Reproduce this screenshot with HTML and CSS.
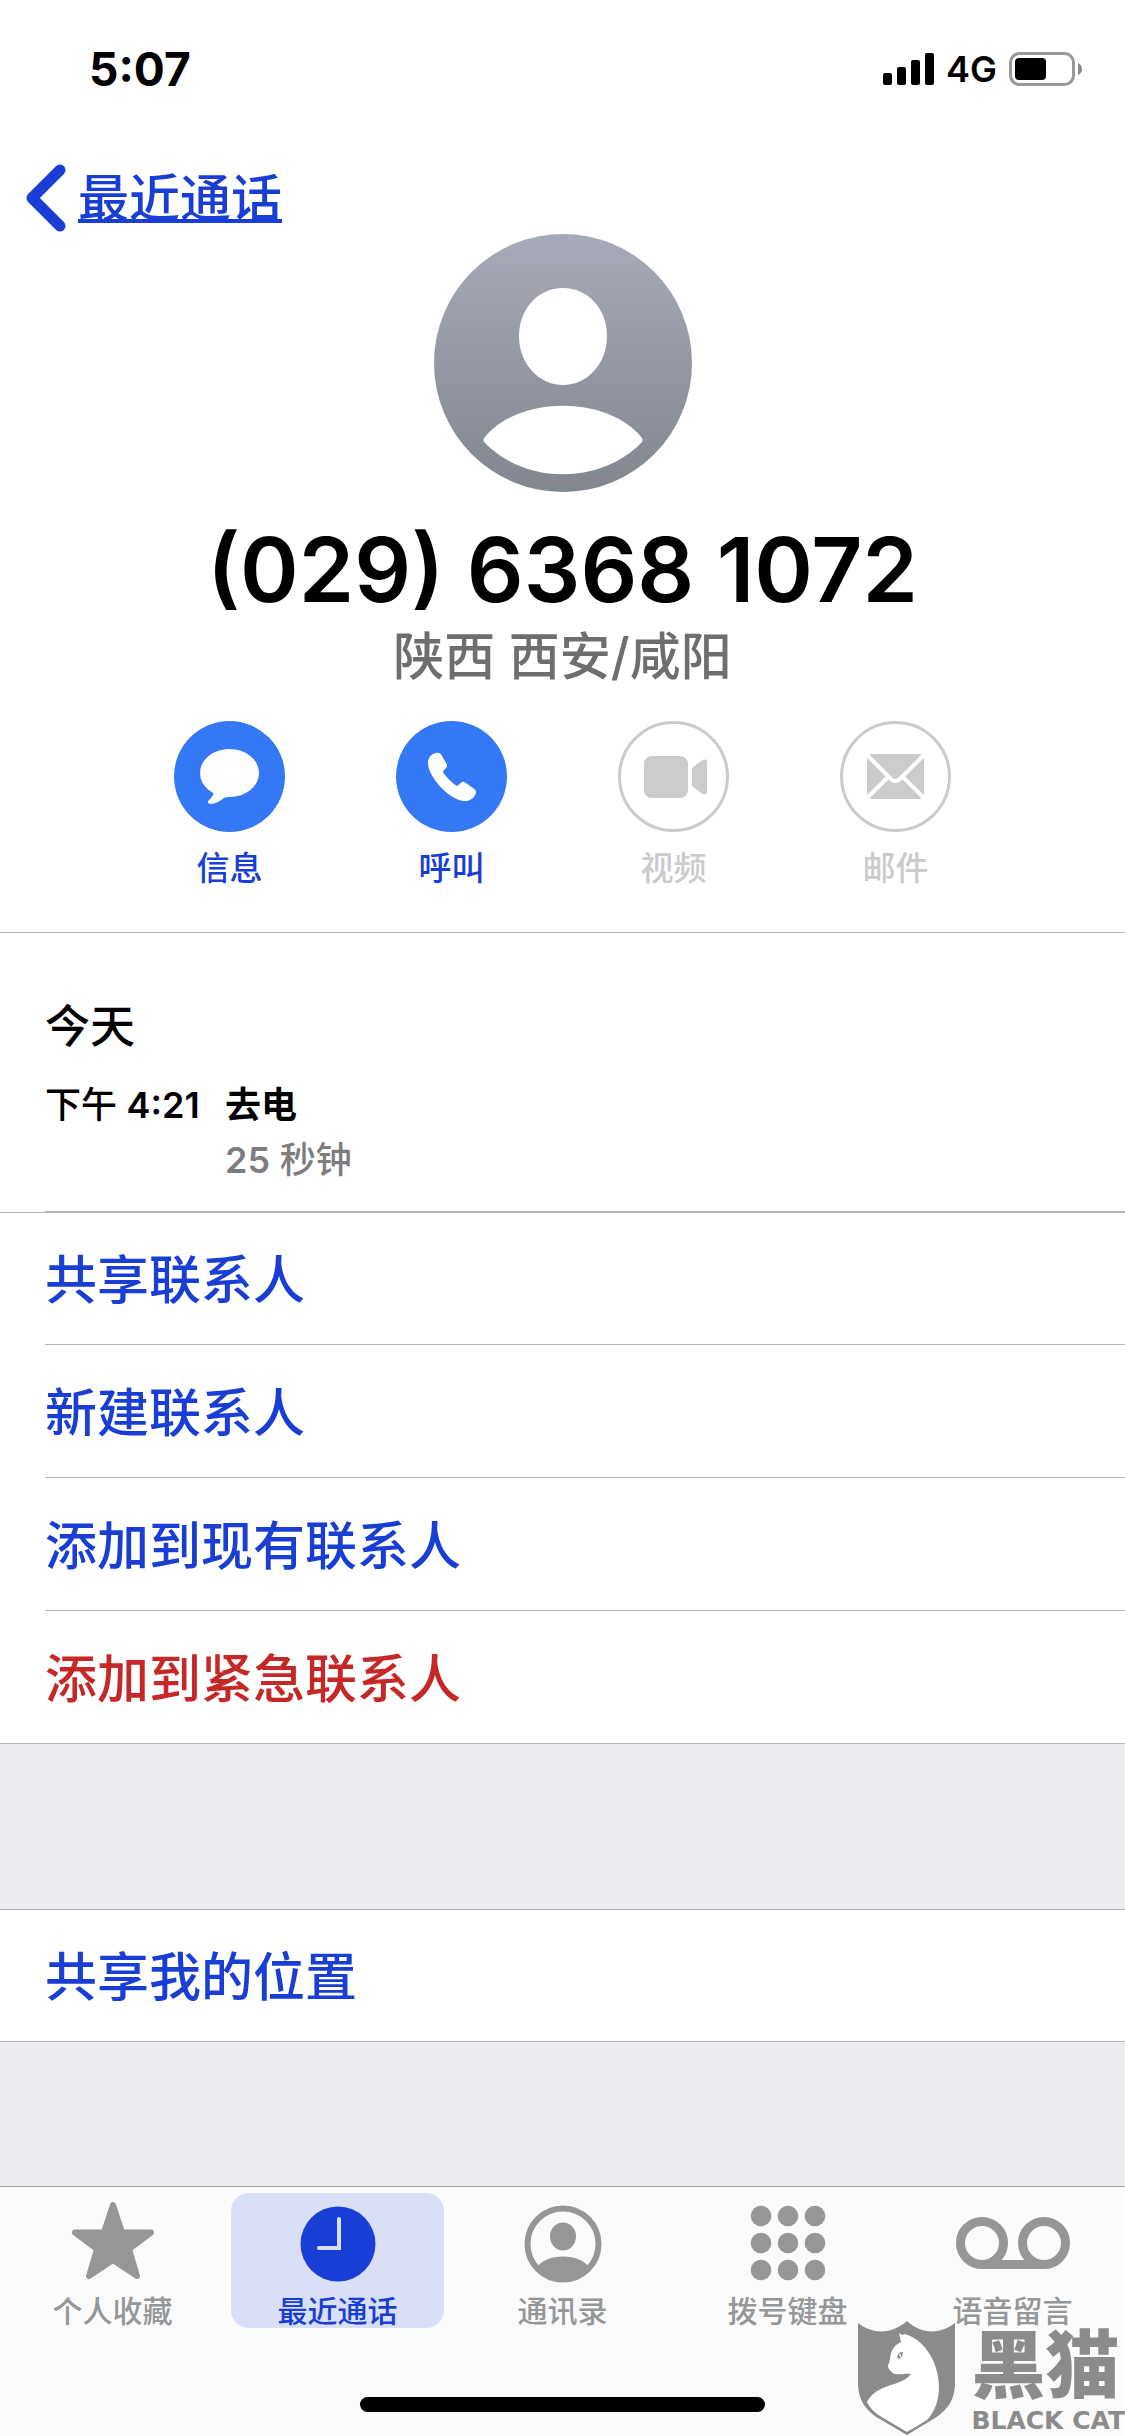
FILE: index.html
```html
<!DOCTYPE html>
<html lang="zh-CN">
<head>
<meta charset="utf-8">
<meta name="viewport" content="width=device-width, initial-scale=1">
<title>最近通话</title>
<link rel="stylesheet" href="styles.css">
</head>
<body>
<div class="screen">
  <header class="status">
    <span class="clock">5:07</span>
    <div class="indicators">
      <svg class="signal" viewBox="0 0 51 34" aria-hidden="true">
        <rect x="0" y="21" width="9" height="12" rx="2"/>
        <rect x="14" y="15" width="9" height="18" rx="2"/>
        <rect x="28" y="8" width="9" height="25" rx="2"/>
        <rect x="42" y="1" width="9" height="32" rx="2"/>
      </svg>
      <span class="network">4G</span>
      <svg class="battery" viewBox="0 0 74 34" aria-hidden="true">
        <rect x="1.5" y="1.5" width="63" height="31" rx="9" fill="none" stroke="#999" stroke-width="3"/>
        <rect x="6" y="6" width="31" height="22" rx="4"/>
        <path d="M69 11 Q73 13 73 17 T69 23Z" fill="#8a8a8a"/>
      </svg>
    </div>
  </header>

  <nav class="topbar">
    <a class="back" href="#recents">
      <svg class="chevron" viewBox="0 0 40 66" aria-hidden="true"><path d="M34 5 L6 33 L34 61"/></svg>
      <span class="back-text">最近通话</span>
    </a>
  </nav>

  <main class="content">
    <section class="card">
      <svg class="avatar" viewBox="0 0 258 258" aria-hidden="true">
        <defs>
          <linearGradient id="avatar-fill" x1="0" y1="0" x2="0" y2="1">
            <stop offset="0" stop-color="#a7abb9"/>
            <stop offset="1" stop-color="#82868f"/>
          </linearGradient>
        </defs>
        <circle cx="129" cy="129" r="129" fill="url(#avatar-fill)"/>
        <path fill="#fff" d="M129 54 C154 54 173 75 173 102 C173 130 153 151 129 151 C105 151 85 130 85 102 C85 75 104 54 129 54Z"/>
        <path fill="#fff" d="M50 204 C84 161 174 161 208 204 Q209 206 208 208 C167 251 91 251 50 208 Q49 206 50 204Z"/>
      </svg>
      <h1 class="number">(029) 6368 1072</h1>
      <p class="region">陕西 西安/咸阳</p>
      <div class="actions">
        <button class="action" type="button">
          <svg class="action-icon" viewBox="0 0 111 111" aria-hidden="true">
            <circle cx="55.5" cy="55.5" r="55.5" fill="#3478f6"/>
            <ellipse cx="55.5" cy="52" rx="29.5" ry="24" fill="#fff"/>
            <path fill="#fff" d="M40 70 C40 76 34 79 34 81 C34 84 40 83 44 81 C48 79 50 76 54 76 L58 70Z"/>
          </svg>
          <span>信息</span>
        </button>
        <button class="action" type="button">
          <svg class="action-icon" viewBox="0 0 111 111" aria-hidden="true">
            <circle cx="55.5" cy="55.5" r="55.5" fill="#3478f6"/>
            <path fill="#fff" d="M40 32 C43 31 45 33 46 35 L50 42 C52 45 51 46 49 48 C48 49 47 50 47 51 C50 56 56 62 61 65 C63 64 64 62 66 61 C68 60 70 62 77 67 C80 69 81 71 79 74 C77 78 73 80 69 80 C54 80 32 56 32 42 C32 37 35 33 40 32Z"/>
          </svg>
          <span>呼叫</span>
        </button>
        <button class="action" type="button" disabled>
          <svg class="action-icon" viewBox="0 0 111 111" aria-hidden="true">
            <circle cx="55.5" cy="55.5" r="54" fill="none" stroke="#cbcbcd" stroke-width="3"/>
            <rect x="26" y="35" width="44" height="42" rx="8" fill="#cbcbcd"/>
            <path fill="#cbcbcd" d="M74 47 L83 40 Q89 36 89 42 V70 Q89 76 83 72 L74 65Z"/>
          </svg>
          <span>视频</span>
        </button>
        <button class="action" type="button" disabled>
          <svg class="action-icon" viewBox="0 0 111 111" aria-hidden="true">
            <circle cx="55.5" cy="55.5" r="54" fill="none" stroke="#cbcbcd" stroke-width="3"/>
            <rect x="27" y="33" width="57" height="45" rx="5" fill="#cbcbcd"/>
            <path fill="none" stroke="#fff" stroke-width="4" d="M27 34 L51 58 Q55.5 62 60 58 L84 34 M48 56 L27 77 M63 56 L84 77"/>
          </svg>
          <span>邮件</span>
        </button>
      </div>
    </section>

    <section class="history">
      <h2 class="day">今天</h2>
      <div class="call">
        <time class="time">下午 <span class="digits">4:21</span></time>
        <div>
          <p class="kind">去电</p>
          <p class="duration"><span class="digits">25</span> 秒钟</p>
        </div>
      </div>
    </section>

    <section class="list">
      <button class="row" type="button">共享联系人</button>
      <button class="row" type="button">新建联系人</button>
      <button class="row" type="button">添加到现有联系人</button>
      <button class="row danger" type="button">添加到紧急联系人</button>
    </section>

    <section class="list location">
      <button class="row" type="button">共享我的位置</button>
    </section>
  </main>

  <footer class="bottom">
    <nav class="tabs">
      <a class="tab" href="#favorites">
        <svg class="tab-icon" viewBox="0 0 84 84" aria-hidden="true">
          <path fill="currentColor" stroke="currentColor" stroke-width="6" stroke-linejoin="round" d="M42 4 L51 31.500 H80 L58 48 L66 75 L42 59 L18 75 L26 48 L4 31.500 H33Z"/>
        </svg>
        <span>个人收藏</span>
      </a>
      <a class="tab selected" href="#recents" aria-current="page">
        <svg class="tab-icon" viewBox="0 0 84 84" aria-hidden="true">
          <circle cx="42" cy="43" r="37.500" fill="currentColor"/>
          <path fill="none" stroke="#d8dff6" stroke-width="4" stroke-linecap="round" d="M43 18 V47 H23"/>
        </svg>
        <span>最近通话</span>
      </a>
      <a class="tab" href="#contacts">
        <svg class="tab-icon" viewBox="0 0 84 84" aria-hidden="true">
          <circle cx="42" cy="43" r="35.500" fill="none" stroke="currentColor" stroke-width="6"/>
          <ellipse cx="42" cy="35.500" rx="13" ry="14" fill="currentColor"/>
          <path fill="currentColor" d="M15 67 Q24 55.500 42 55.500 T69 67 A38 38 0 0 1 15 67Z"/>
        </svg>
        <span>通讯录</span>
      </a>
      <a class="tab" href="#keypad">
        <svg class="tab-icon" viewBox="0 0 84 84" aria-hidden="true">
          <g fill="currentColor">
            <circle cx="15" cy="15" r="10.300"/><circle cx="42" cy="15" r="10.300"/><circle cx="69" cy="15" r="10.300"/>
            <circle cx="15" cy="42" r="10.300"/><circle cx="42" cy="42" r="10.300"/><circle cx="69" cy="42" r="10.300"/>
            <circle cx="15" cy="69" r="10.300"/><circle cx="42" cy="69" r="10.300"/><circle cx="69" cy="69" r="10.300"/>
          </g>
        </svg>
        <span>拨号键盘</span>
      </a>
      <a class="tab" href="#voicemail">
        <svg class="tab-icon wide" viewBox="0 0 120 84" aria-hidden="true">
          <g fill="none" stroke="currentColor" stroke-width="9">
            <circle cx="29" cy="42" r="21.500"/>
            <circle cx="91" cy="42" r="21.500"/>
            <path d="M29 63.500 H91"/>
          </g>
        </svg>
        <span>语音留言</span>
      </a>
    </nav>
    <div class="home-indicator"></div>
  </footer>

  <div class="watermark">
    <svg class="shield" viewBox="0 0 98 115" aria-hidden="true">
      <path fill="#8b8b8b" d="M0 2 C16 14 34 13 49 0 C63 13 81 14 97 2 V62 C97 80 88 90 77 97 L49 114 L20 97 C9 90 0 80 0 62Z"/>
      <path fill="#fff" d="M41 12 L44 14 L47 13 C65 18 81 40 81 66 C81 80 76 92 69 99 L49 111 L22 95 C16 91 12 87 9 81 C11 77 14 73 21 69 C31 63 47 62 53 53 C47 52 45 54 37 53 C34 52 30 48 30 45 C30 43 32 41 32 38 C33 28 37 24 43 21Z"/>
      <path fill="#8b8b8b" d="M39 36 Q40 31 45 31 Q45 36 41 38Z"/>
      <path fill="#fff" d="M41 33 H43 V36 H42Z"/>
    </svg>
    <div class="brand">
      <span class="brand-cn">黑猫</span>
      <span class="brand-en">BLACK CAT</span>
    </div>
  </div>
</div>
</body>
</html>
```
FILE: styles.css
```css
:root {
  --blue: #183ed5;
  --line: #b4b4b6;
  --gray: #959698;
}

* {
  box-sizing: border-box;
}

body {
  margin: 0;
  background: #fff;
  color: #000;
  font-family: Inter, "Noto Sans CJK SC", sans-serif;
}

h1, h2, p {
  margin: 0;
}

button {
  margin: 0;
  padding: 0;
  border: 0;
  background: none;
  color: inherit;
  font: inherit;
}

a {
  color: inherit;
  text-decoration: none;
}

svg {
  display: block;
}

.screen {
  position: relative;
  display: flex;
  flex-direction: column;
  min-height: 100vh;
}

/* Status bar */
.status {
  display: flex;
  justify-content: space-between;
  align-items: center;
  padding: 42px 42px 66px 89px;
  line-height: 54px;
}

.clock {
  font-size: 46px;
  font-weight: 700;
}

.indicators {
  display: flex;
  align-items: center;
}

.signal {
  width: 51px;
  height: 34px;
}

.network {
  margin: 0 12px;
  font-size: 36px;
  font-weight: 600;
}

.battery {
  width: 74px;
  height: 34px;
}

/* Back link */
.topbar {
  display: flex;
  padding: 0 26px;
}

.back {
  display: flex;
  align-items: center;
  gap: 12px;
  height: 72px;
  color: var(--blue);
}

.chevron {
  width: 40px;
  height: 66px;
  fill: none;
  stroke: currentColor;
  stroke-width: 11;
  stroke-linecap: round;
  stroke-linejoin: round;
  overflow: visible;
}

.back-text {
  padding-top: 2px;
  font-size: 51px;
  font-weight: 500;
  line-height: 72px;
  text-decoration: underline;
  text-decoration-thickness: 4px;
  text-decoration-skip-ink: none;
}

/* Contact card */
.content {
  flex: 1;
  background: #ebebf0;
}

.card {
  display: flex;
  flex-direction: column;
  align-items: center;
  padding-bottom: 40px;
  border-bottom: 1px solid var(--line);
  background: #fff;
}

.avatar {
  width: 258px;
  height: 258px;
}

.number {
  margin-top: 24px;
  font-size: 89px;
  font-weight: 600;
  line-height: 108px;
}

.region {
  color: #6e6e6e;
  font-size: 51px;
  font-weight: 500;
  line-height: 66px;
}

.actions {
  display: grid;
  grid-template-columns: repeat(4, 1fr);
  width: 100%;
  max-width: 888px;
  margin-top: 31px;
}

.action {
  display: flex;
  flex-direction: column;
  align-items: center;
  gap: 12px;
  color: var(--blue);
  font-size: 33px;
  font-weight: 500;
  line-height: 48px;
}

.action:disabled {
  color: #cbcbcd;
}

.action-icon {
  width: 111px;
  height: 111px;
}

/* Call history */
.history {
  padding: 61px 0 0 45px;
  background: #fff;
}

.day {
  font-size: 45px;
  font-weight: 500;
  line-height: 66px;
}

.call {
  display: grid;
  grid-template-columns: 180px 1fr;
  margin-top: 18px;
  padding-bottom: 23px;
  border-bottom: 1px solid var(--line);
  font-size: 36px;
  font-weight: 500;
  line-height: 55px;
}

.digits {
  font-weight: 600;
}

.kind {
  font-weight: 700;
}

.duration {
  color: #7d7d80;
}

/* Action lists */
.list {
  border-top: 1px solid var(--line);
  border-bottom: 1px solid var(--line);
  background: #fff;
}

.location {
  margin-top: 165px;
}

.row {
  display: block;
  width: calc(100% - 45px);
  height: 131px;
  margin-left: 45px;
  padding-bottom: 4px;
  color: var(--blue);
  font-size: 52px;
  font-weight: 500;
  text-align: left;
}

.row + .row {
  height: 133px;
  border-top: 1px solid var(--line);
}

.danger {
  color: #c62828;
}

/* Tab bar */
.bottom {
  padding: 6px 0 24px;
  border-top: 1px solid #a0a0a8;
  background: #fbfbfb;
}

.tabs {
  display: grid;
  grid-template-columns: repeat(5, 1fr);
}

.tab {
  display: flex;
  flex-direction: column;
  align-items: center;
  gap: 9px;
  margin: 0 6px;
  padding-top: 8px;
  border-radius: 18px;
  color: var(--gray);
  font-size: 30px;
  font-weight: 500;
  line-height: 34px;
}

.selected {
  background: #d8dff6;
  color: var(--blue);
}

.tab-icon {
  width: 84px;
  height: 84px;
}

.wide {
  width: 120px;
}

.home-indicator {
  width: 36%;
  height: 15px;
  margin: 69px auto 0;
  border-radius: 8px;
  background: #000;
}

/* Brand mark lying over the tab bar */
.watermark {
  position: absolute;
  right: 0;
  bottom: 0;
  display: flex;
  gap: 15px;
  color: #8b8b8b;
}

.shield {
  width: 98px;
  height: 115px;
}

.brand {
  display: flex;
  flex-direction: column;
  gap: 10px;
}

.brand-cn {
  font-family: "Noto Sans CJK SC", sans-serif;
  font-size: 74px;
  font-weight: 900;
  line-height: 77px;
}

.brand-en {
  font-family: "DejaVu Sans", sans-serif;
  font-size: 25px;
  font-weight: 700;
  line-height: 25px;
}
```
